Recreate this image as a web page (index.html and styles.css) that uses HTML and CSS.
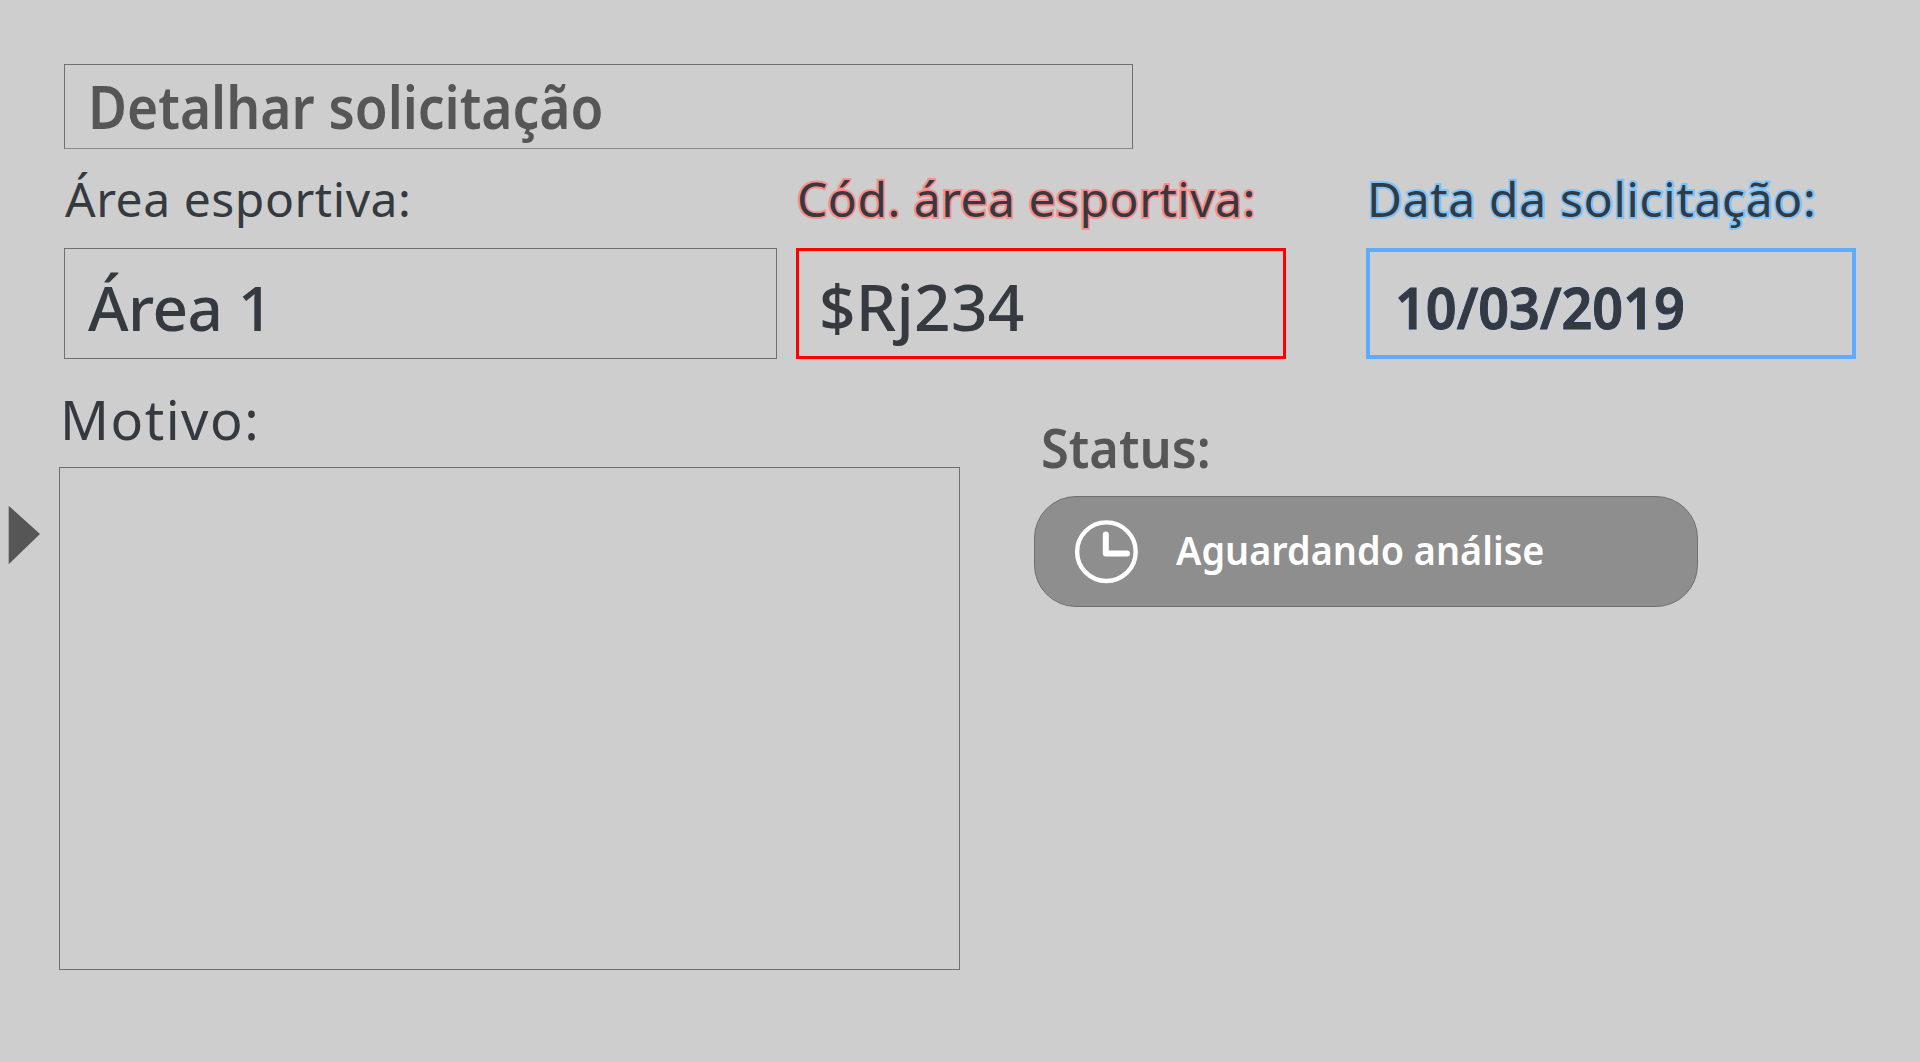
FILE: index.html
```
<!DOCTYPE html>
<html lang="pt-BR">
<head>
<meta charset="utf-8">
<title>Detalhar solicitação</title>
<link rel="stylesheet" href="styles.css">
</head>
<body>
<main class="page">
  <h1 class="title"><span class="title-text">Detalhar solicitação</span></h1>
  <section class="fields">
    <div class="field">
      <div class="label">Área esportiva:</div>
      <div class="value value-area">Área 1</div>
    </div>
    <div class="field">
      <div class="label label-code">Cód. área esportiva:</div>
      <div class="value value-code">$Rj234</div>
    </div>
    <div class="field">
      <div class="label label-date">Data da solicitação:</div>
      <div class="value value-date"><span class="date-text">10/03/2019</span></div>
    </div>
  </section>
  <section class="details">
    <div class="reason">
      <div class="reason-label">Motivo:</div>
      <div class="reason-box"></div>
    </div>
    <div class="status">
      <div class="status-label"><span class="status-title">Status:</span></div>
      <div class="pill">
        <svg class="clock" viewBox="0 0 66 66" width="66" height="66">
          <circle cx="33.4" cy="32.7" r="29.3" fill="none" stroke="#fff" stroke-width="4.4"/>
          <path d="M32.8 15.5V34.5H54" fill="none" stroke="#fff" stroke-width="6" stroke-linecap="round" stroke-linejoin="round"/>
        </svg>
        <span class="pill-text">Aguardando análise</span>
      </div>
    </div>
  </section>
  <svg class="arrow" viewBox="0 0 32 60" width="32" height="60"><path d="M.7 .8L32 29L.7 59.3Z" fill="#565656"/></svg>
</main>
</body>
</html>
```
FILE: styles.css
```
* { box-sizing: border-box; }

body {
  margin: 0;
  background: #cecece;
  color: #343a40;
  font-family: "Noto Sans", "Open Sans", sans-serif;
  white-space: nowrap;
}

.page {
  position: relative;
  width: 1920px;
  height: 1062px;
  padding: 64px 64px 0;
  overflow: hidden;
}

.title {
  width: 1069px;
  height: 85px;
  margin: 0;
  padding-left: 23px;
  border: 1px solid #707070;
  border-bottom-color: #8a8a8a;
  color: #565656;
  font-size: 59px;
  font-weight: 600;
  line-height: 83px;
}

.title-text, .date-text, .status-title, .pill-text {
  display: inline-block;
  transform-origin: 0 50%;
}

.title-text { transform: scaleX(.904); }

.fields {
  display: grid;
  grid-template-columns: 713px 490px 490px;
  column-gap: 19px;
}

.field:last-child { margin-left: 61px; width: 490px; }

.label {
  padding: 1px 0 1px 1px;
  font-size: 48px;
  line-height: 97px;
  letter-spacing: .54px;
}

.label-code, .label-date { paint-order: stroke; }

.label-code {
  letter-spacing: .5px;
  -webkit-text-stroke: 4px #fc8d8d;
}

.label-date {
  letter-spacing: .68px;
  -webkit-text-stroke: 4px #7cc4ff;
}

.value { height: 111px; }

.value-area {
  padding-left: 23px;
  border: 1px solid #707070;
  font-size: 62px;
  font-weight: 500;
  line-height: 116px;
  letter-spacing: -.6px;
}

.value-code {
  padding-left: 20px;
  border: 3px solid #f00;
  font-size: 64px;
  font-weight: 500;
  line-height: 112px;
  letter-spacing: .25px;
}

.value-date {
  padding-left: 25px;
  border: 4px solid #5dacff;
  font-size: 58px;
  font-weight: 600;
  line-height: 110px;
  paint-order: stroke;
  -webkit-text-stroke: 1px #0c3580;
}

.date-text { transform: scaleX(.93); }

.details {
  display: flex;
  gap: 74px;
  margin-left: -5px;
}

.reason { width: 901px; }

.reason-label {
  padding: 12px 0 0 1px;
  margin-bottom: -1px;
  font-size: 54px;
  line-height: 97px;
  letter-spacing: 1.5px;
}

.reason-box {
  height: 503px;
  border: 1px solid #707070;
}

.status { width: 664px; }

.status-label {
  padding: 39px 0 1px 7px;
  color: #565656;
  font-size: 55px;
  font-weight: 600;
  line-height: 97px;
}

.status-title { transform: scaleX(.92); }

.pill {
  display: flex;
  align-items: center;
  height: 111px;
  padding-left: 38px;
  border: 1px solid #707070;
  border-radius: 42px;
  background: #8e8e8e;
  color: #fff;
}

.clock { flex: none; }

.pill-text {
  margin: 0 0 4px 37px;
  font-size: 39px;
  font-weight: 600;
  line-height: 54px;
  transform: scaleX(.97);
}

.arrow {
  position: absolute;
  left: 8px;
  top: 505px;
}
```
